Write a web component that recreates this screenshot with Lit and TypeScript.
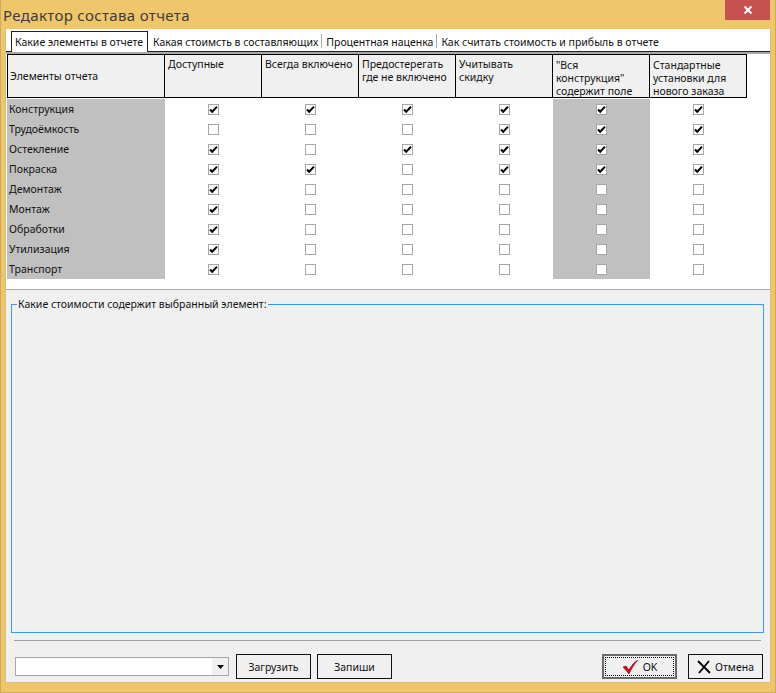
import {LitElement, html, css} from 'lit';
import {customElement} from 'lit/decorators.js';

const COLS = [
  ['Доступные'],
  ['Всегда включено'],
  ['Предостерегать', 'где не включено'],
  ['Учитывать', 'скидку'],
  ['"Вся', 'конструкция"', 'содержит поле'],
  ['Стандартные', 'установки для', 'нового заказа'],
];

const ROWS: [string, number[]][] = [
  ['Конструкция', [1, 1, 1, 1, 1, 1]],
  ['Трудоёмкость', [0, 0, 0, 1, 1, 1]],
  ['Остекление', [1, 0, 1, 1, 1, 1]],
  ['Покраска', [1, 1, 0, 1, 1, 1]],
  ['Демонтаж', [1, 0, 0, 0, 0, 0]],
  ['Монтаж', [1, 0, 0, 0, 0, 0]],
  ['Обработки', [1, 0, 0, 0, 0, 0]],
  ['Утилизация', [1, 0, 0, 0, 0, 0]],
  ['Транспорт', [1, 0, 0, 0, 0, 0]],
];

const TABS = [
  'Какая стоимсть в составляющих',
  'Процентная наценка',
  'Как считать стоимость и прибыль в отчете',
];

@customElement('app-root')
export class AppRoot extends LitElement {
  static styles = css`
    :host {
      display: block;
      width: 776px;
      height: 693px;
      box-sizing: border-box;
      background: #efc669;
      border: 1px solid #c8aa62;
      border-top: none;
      font-family: "Noto Sans", sans-serif;
      font-size: 10.5px;
      color: #111;
    }
    .titlebar {
      height: 29px;
      display: grid;
      grid-template-columns: 1fr auto 1fr;
      align-items: center;
    }
    .title {
      font-size: 15px;
      color: #3c3c3c;
      padding-left: 2px;
      letter-spacing: 0.35px;
    }
    .close {
      grid-column: 3;
      justify-self: end;
      align-self: start;
      width: 45px;
      height: 20px;
      margin-right: 5px;
      background: #c75050;
      display: flex;
      align-items: center;
      justify-content: center;
    }
    .body {
      margin: 0 4px;
      height: 654px;
      background: #f0f0f0;
      border: 1px solid #d8be80;
      border-top: none;
      box-sizing: border-box;
      display: flex;
      flex-direction: column;
    }
    .tabs {
      height: 23px;
      flex: none;
      background: #fff;
      box-sizing: border-box;
      border-bottom: 1px solid #222;
      display: flex;
      align-items: flex-end;
      padding-left: 5px;
    }
    .tab {
      height: 19px;
      padding: 0 4px;
      display: flex;
      align-items: center;
      white-space: nowrap;
      position: relative;
    }
    .tab + .tab::before {
      content: "";
      position: absolute;
      left: -1px;
      top: 2px;
      height: 14px;
      width: 1px;
      background: #aaa;
    }
    .tab:first-child + .tab::before {
      display: none;
    }
    .tab.active {
      height: 21px;
      background: #fff;
      border: 1px solid #222;
      border-bottom: none;
      box-sizing: border-box;
      padding: 0 4px 0 3px;
      margin-bottom: -1px;
      margin-right: 1px;
    }
    .sheet {
      height: 238px;
      flex: none;
      background: #fff;
      border-top: 2px solid #a8a8a8;
      border-bottom: 1px solid #a8a8a8;
      box-sizing: border-box;
      padding-left: 1px;
    }
    .grid {
      display: grid;
      grid-template-columns: 158px repeat(6, 97px);
      grid-auto-rows: 20px;
      width: 741px;
    }
    .head {
      height: 44px;
      box-sizing: border-box;
      background: #f0f0f0;
      border: 1px solid #000;
      border-left: none;
      border-top-width: 1px;
      padding: 3px 3px 0;
      line-height: 13px;
      white-space: nowrap;
    }
    .head.first {
      border-left: 1px solid #000;
      padding: 0 2px;
      display: flex;
      align-items: center;
    }
    .head.tall {
      padding-top: 4px;
    }
    .head-row {
      display: contents;
    }
    .grid > .head {
      grid-row: 1;
    }
    .grid {
      grid-template-rows: 45px;
    }
    .cell {
      display: flex;
      align-items: center;
      justify-content: center;
    }
    .cell.name {
      justify-content: flex-start;
      padding-left: 2px;
    }
    .cell.shade {
      background: #c0c0c0;
    }
    .box {
      width: 11px;
      height: 11px;
      box-sizing: border-box;
      border: 1px solid #a6a6a6;
      background: #fff;
      display: block;
    }
    .box svg {
      display: block;
    }
    .lower {
      flex: 1;
      display: flex;
      flex-direction: column;
      padding: 8px 6px 0 5px;
      min-height: 0;
    }
    fieldset {
      flex: none;
      height: 335px;
      margin: 0;
      padding: 0;
      box-sizing: border-box;
      border: 1px solid #3399ff;
      min-width: 0;
    }
    legend {
      margin-left: 5px;
      padding: 0 1px;
      line-height: 13px;
    }
    .rule {
      height: 1px;
      background: #a0a0a0;
      margin: 7px 3px 0 3px;
      flex: none;
    }
    .footer {
      display: flex;
      align-items: center;
      padding: 13px 1px 0 4px;
    }
    .combo {
      width: 214px;
      height: 19px;
      box-sizing: border-box;
      border: 1px solid #a6a6a6;
      background: #fff;
      display: flex;
      justify-content: flex-end;
      margin-right: 7px;
    }
    .drop {
      width: 16px;
      background: #f0f0f0;
      display: flex;
      align-items: center;
      justify-content: center;
    }
    .btn {
      width: 75px;
      height: 25px;
      box-sizing: border-box;
      border: 1px solid #111;
      background: #f0f0f0;
      display: flex;
      align-items: center;
      justify-content: center;
      gap: 4px;
      color: #111;
    }
    .btn + .btn {
      margin-left: 6px;
    }
    .spacer {
      flex: 1;
    }
    .btn.default {
      border: 2px solid #6a6a6a;
      padding: 0;
      margin-right: 5px;
    }
    .btn.default .focus {
      flex: 1;
      align-self: stretch;
      margin: 1px;
      border: 1px dotted #000;
      display: flex;
      align-items: center;
      justify-content: center;
      gap: 4px;
    }
    .spacer + .btn {
      margin-left: 0;
    }
  `;

  private checkbox(on: number) {
    return html`<span class="box">${on
      ? html`<svg width="9" height="9" viewBox="0 0 9 9"><path d="M1 4.5 L3.2 6.8 L8 1.6" fill="none" stroke="#000" stroke-width="2"/></svg>`
      : ''}</span>`;
  }

  protected render() {
    return html`
      <div class="titlebar">
        <div class="title">Редактор состава отчета</div>
        <div class="close">
          <svg width="10" height="10" viewBox="0 0 10 10"><path d="M1.5 1.5 L8.5 8.5 M8.5 1.5 L1.5 8.5" stroke="#fff" stroke-width="2"/></svg>
        </div>
      </div>
      <div class="body">
        <div class="tabs">
          <div class="tab active">Какие элементы в отчете</div>
          ${TABS.map((t) => html`<div class="tab">${t}</div>`)}
        </div>
        <div class="sheet">
          <div class="grid">
            <div class="head first">Элементы отчета</div>
            ${COLS.map((lines) => html`<div class="head ${lines.length > 2 ? 'tall' : ''}">
              ${lines.map((l) => html`<div>${l}</div>`)}
            </div>`)}
            ${ROWS.map(([name, vals]) => html`
              <div class="cell name shade">${name}</div>
              ${vals.map((v, i) => html`<div class="cell ${i === 4 ? 'shade' : ''}">${this.checkbox(v)}</div>`)}
            `)}
          </div>
        </div>
        <div class="lower">
          <fieldset><legend>Какие стоимости содержит выбранный элемент:</legend></fieldset>
          <div class="rule"></div>
          <div class="footer">
            <div class="combo">
              <div class="drop">
                <svg width="7" height="4" viewBox="0 0 7 4"><path d="M0 0 H7 L3.5 4 Z" fill="#000"/></svg>
              </div>
            </div>
            <div class="btn">Загрузить</div>
            <div class="btn">Запиши</div>
            <div class="spacer"></div>
            <div class="btn default">
              <div class="focus">
                <svg width="17" height="16" viewBox="0 0 17 16"><path d="M1 8 L4 7 L7 11 C9 7 12 3 16 1 C12 5 9.500 10 7 15 Z" fill="#e8001c" stroke="#600" stroke-width="0.5"/></svg>
                OK
              </div>
            </div>
            <div class="btn">
              <svg width="14" height="14" viewBox="0 0 14 14"><path d="M1 1 L13 13 M12 1 L2 13" stroke="#000" stroke-width="1.800"/></svg>
              Отмена
            </div>
          </div>
        </div>
      </div>
    `;
  }
}
